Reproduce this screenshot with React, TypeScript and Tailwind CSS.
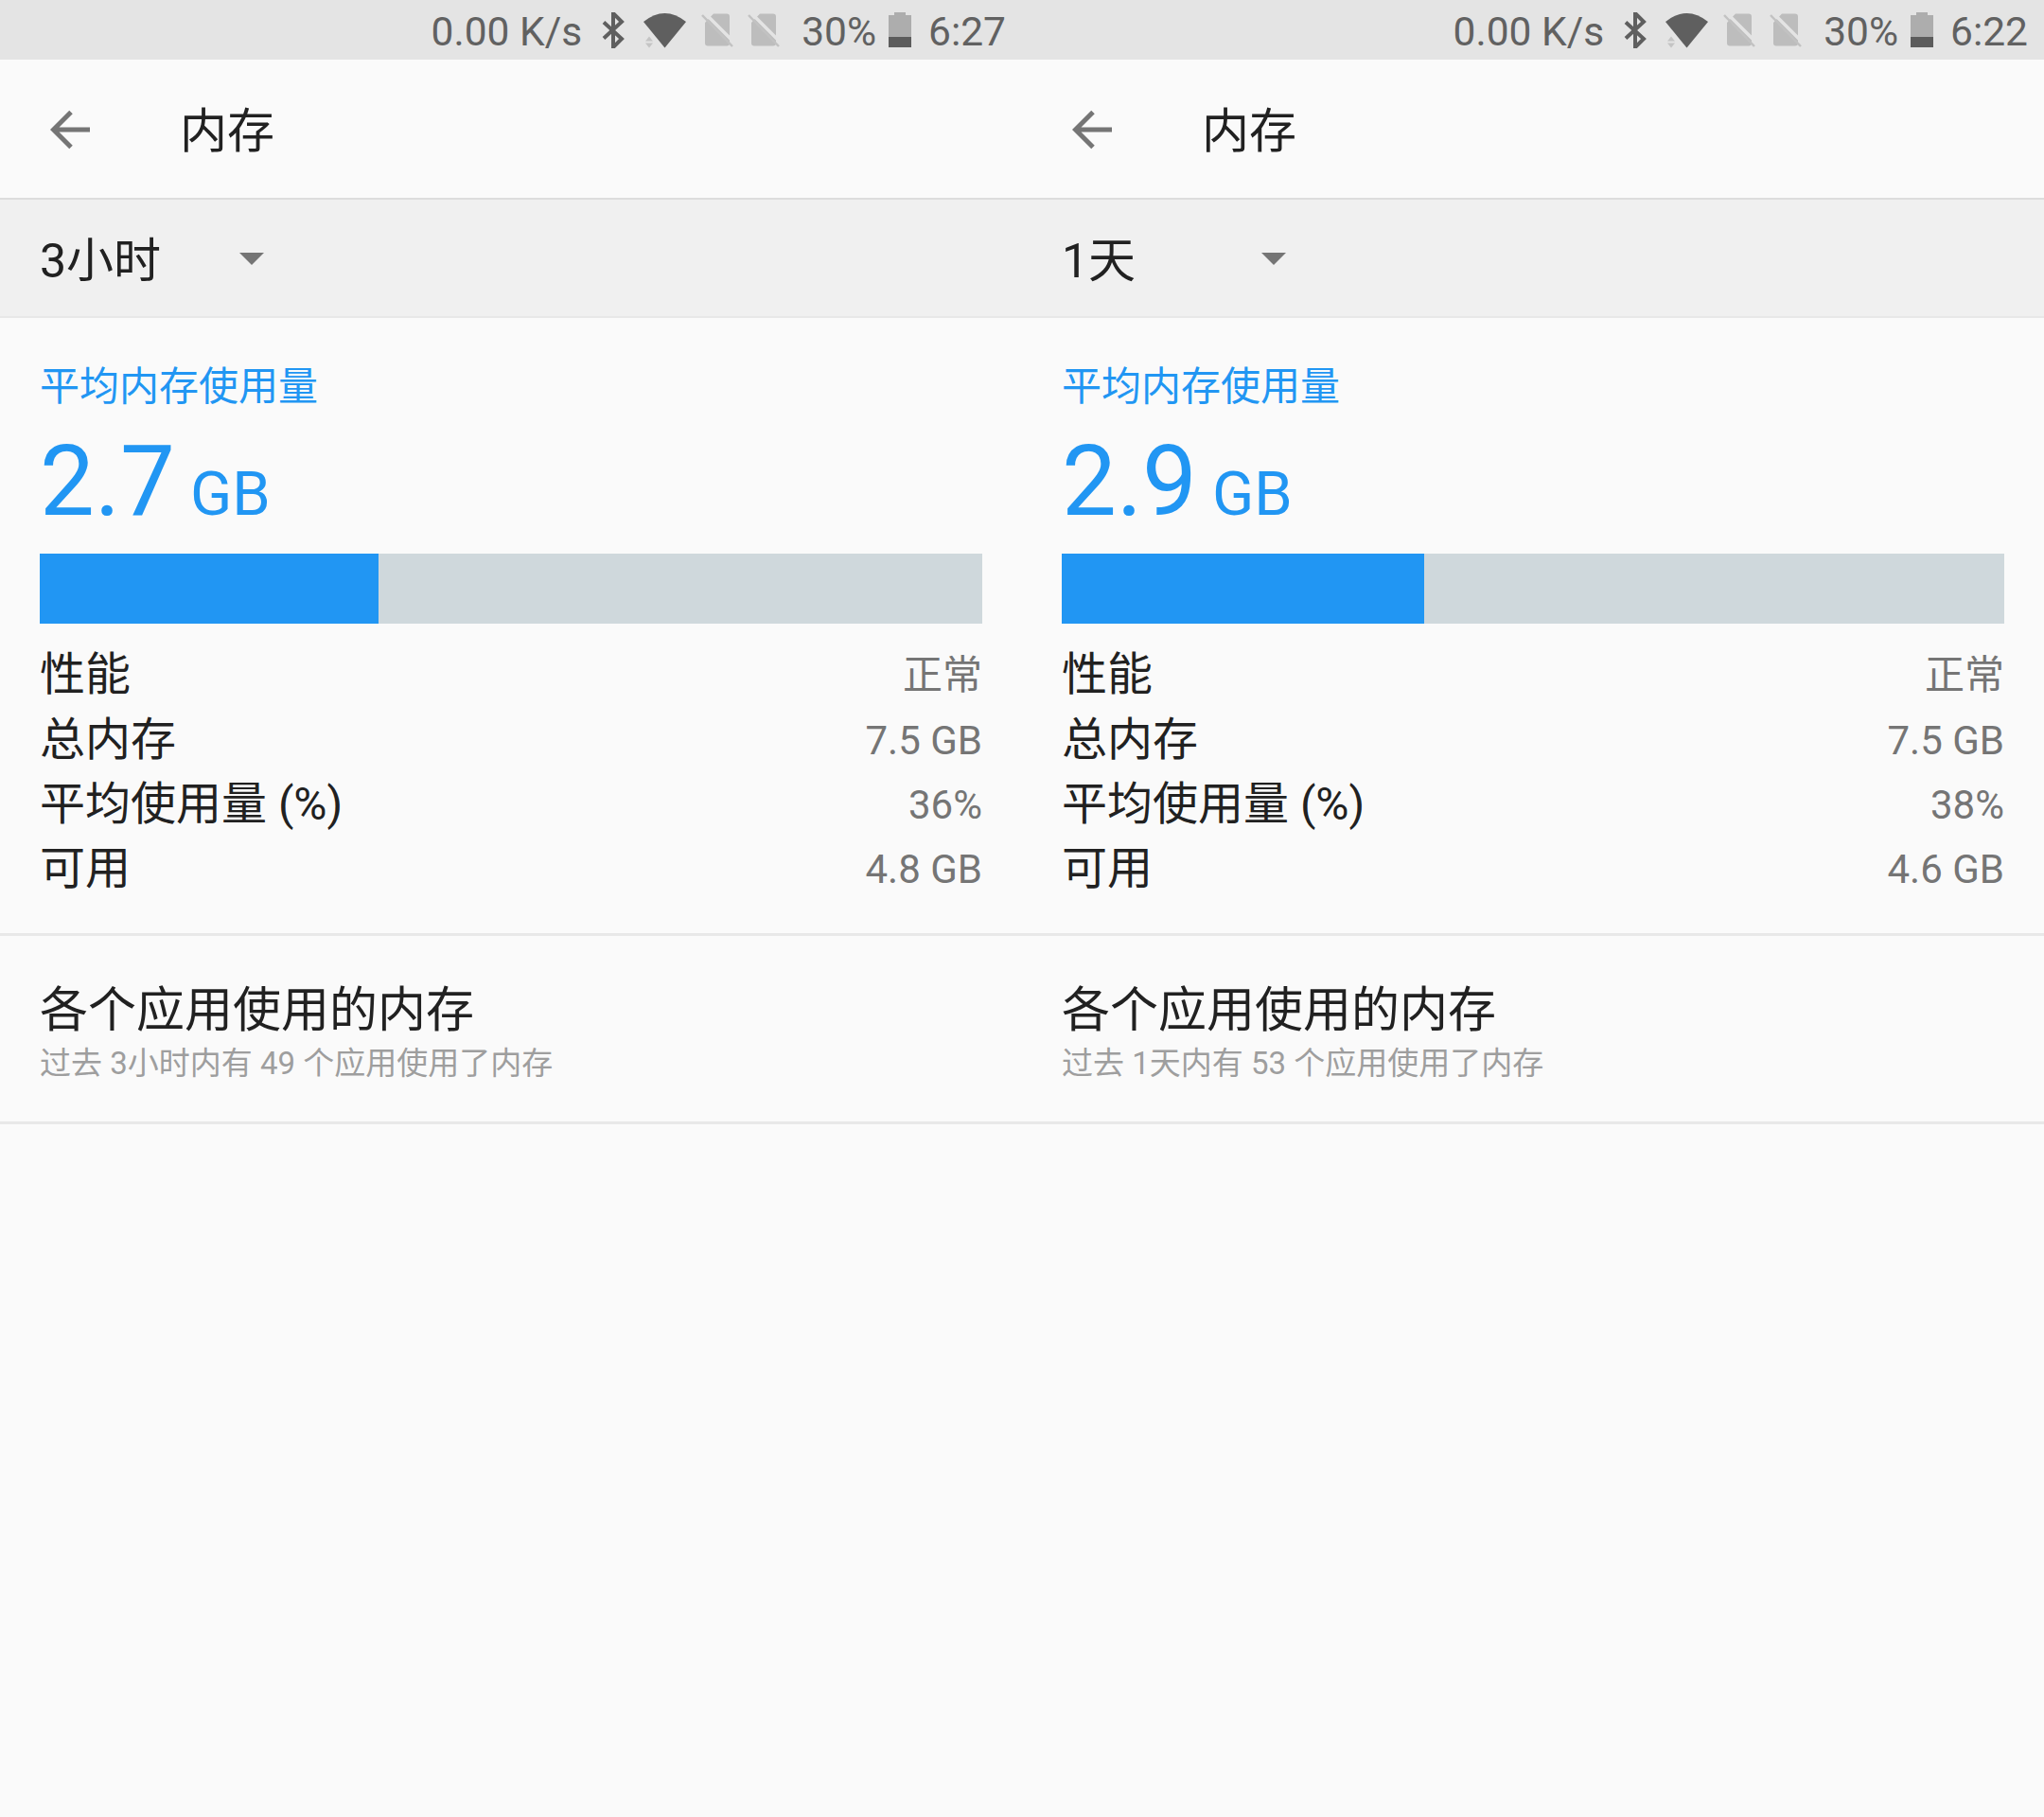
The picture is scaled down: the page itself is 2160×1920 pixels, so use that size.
type Panel = {
  clock: string;
  range: string;
  avg: string;
  percent: string;
  free: string;
  barWidth: number;
  note: string;
};

const panels: Panel[] = [
  { clock: '6:27', range: '3小时', avg: '2.7', percent: '36%', free: '4.8 GB', barWidth: 35.95, note: '过去 3小时内有 49 个应用使用了内存' },
  { clock: '6:22', range: '1天', avg: '2.9', percent: '38%', free: '4.6 GB', barWidth: 38.45, note: '过去 1天内有 53 个应用使用了内存' },
];

function SimOff({ className }: { className: string }) {
  return (
    <svg viewBox="0 0 34 36" className={className}>
      <path d="M13 .5h14a3 3 0 0 1 3 3v28a3 3 0 0 1-3 3H7a3 3 0 0 1-3-3V10z" fill="#bdbdbd" />
      <path d="M3 -1l31 31" stroke="#e4e4e4" strokeWidth="3.500" />
      <path d="M1 2l32 33" stroke="#c2c2c2" strokeWidth="2.500" />
    </svg>
  );
}

function StatusBar({ clock }: { clock: string }) {
  return (
    <div className="flex h-[63px] items-center justify-end bg-[#e4e4e4] pr-[17px] text-[42.5px] leading-none text-[#616161]">
      <span className="mt-[5px]">0.00 K/s</span>
      <svg viewBox="0 0 24 38" className="ml-[21px] h-[38px] w-[24px]" fill="none" stroke="#5f5f5f" strokeWidth="4">
        <path d="M2 10.500L21 28l-9 9V1l9 9L2 27.500" />
      </svg>
      <svg viewBox="0 0 45 38" className="ml-[20px] h-[38px] w-[45px]">
        <path d="M0 10Q22.500-8 45 10L22.500 37.500z" fill="#5f5f5f" />
        <path d="M6 25.500l4 5H2zM6 37.500l4-5H2z" fill="#c4c4c4" />
      </svg>
      <SimOff className="ml-[16px] h-[36px] w-[34px]" />
      <SimOff className="ml-[15px] h-[36px] w-[34px]" />
      <span className="mt-[5px] ml-[23px]">30%</span>
      <svg viewBox="0 0 24 37" className="ml-[13px] h-[37px] w-[24px]">
        <path d="M6 0h12v3h6v34H0V3h6z" fill="#adadad" />
        <path d="M0 26h24v11H0z" fill="#5c5c5c" />
      </svg>
      <span className="mt-[5px] ml-[18px]">{clock}</span>
    </div>
  );
}

function StatRow({ label, value }: { label: string; value: string }) {
  return (
    <div className="flex h-[68.4px] items-center justify-between">
      <span className="text-[48px] leading-none text-[#212121]">{label}</span>
      <span className="mt-[2px] text-[42px] leading-none text-[#757575]">{value}</span>
    </div>
  );
}

function MemoryPanel({ panel }: { panel: Panel }) {
  return (
    <section>
      <StatusBar clock={panel.clock} />

      <div className="flex h-[148px] items-center border-b-2 border-[#dcdcdc] pl-[53px]">
        <svg viewBox="0 0 42 42" className="mt-[2px] h-[42px] w-[42px]" fill="none" stroke="#757575" strokeWidth="5">
          <path d="M42 21H4M22 2.500L3.500 21 22 39.500" />
        </svg>
        <h1 className="mt-[6px] ml-[95px] text-[50px] leading-none font-normal text-[#212121]">内存</h1>
      </div>

      <div className="flex h-[125px] items-center border-b-2 border-[#e8e8e8] bg-[#f0f0f0] pl-[42px] text-[#212121]">
        <span className="mt-[6px] w-[211px] text-[50px] leading-none">{panel.range}</span>
        <svg viewBox="0 0 26 13" className="mt-[2px] h-[13px] w-[26px]">
          <path d="M0 0h26L13 13z" fill="#757575" />
        </svg>
      </div>

      <div className="border-b-[3px] border-[#e8e8e8] px-[42px] pb-[33px]">
        <p className="pt-[48px] text-[42px] leading-[50px] text-[#2196f3]">平均内存使用量</p>
        <div className="mt-[25px] flex h-[100px] items-baseline text-[#2196f3]">
          <span className="text-[103px] leading-[100px]">{panel.avg}</span>
          <span className="ml-[16px] text-[65px] leading-none">GB</span>
        </div>
        <div className="mt-[26px] h-[74px] bg-[#cfd8dc]">
          <div className="h-full bg-[#2196f3]" style={{ width: `${panel.barWidth}%` }} />
        </div>
        <div className="mt-[20px]">
          <StatRow label="性能" value="正常" />
          <StatRow label="总内存" value="7.5 GB" />
          <StatRow label="平均使用量 (%)" value={panel.percent} />
          <StatRow label="可用" value={panel.free} />
        </div>
      </div>

      <div className="h-[199px] border-b-[3px] border-[#e8e8e8] px-[42px] pt-[51px]">
        <p className="text-[51px] leading-[56px] text-[#212121]">各个应用使用的内存</p>
        <p className="mt-[7px] text-[33px] leading-[42px] text-[#9e9e9e]">{panel.note}</p>
      </div>
    </section>
  );
}

export default function App() {
  return (
    <main className="grid min-h-[1920px] grid-cols-2 bg-[#fafafa] font-['Roboto','Noto_Sans_CJK_SC',sans-serif]">
      {panels.map((panel) => (
        <MemoryPanel key={panel.clock} panel={panel} />
      ))}
    </main>
  );
}
